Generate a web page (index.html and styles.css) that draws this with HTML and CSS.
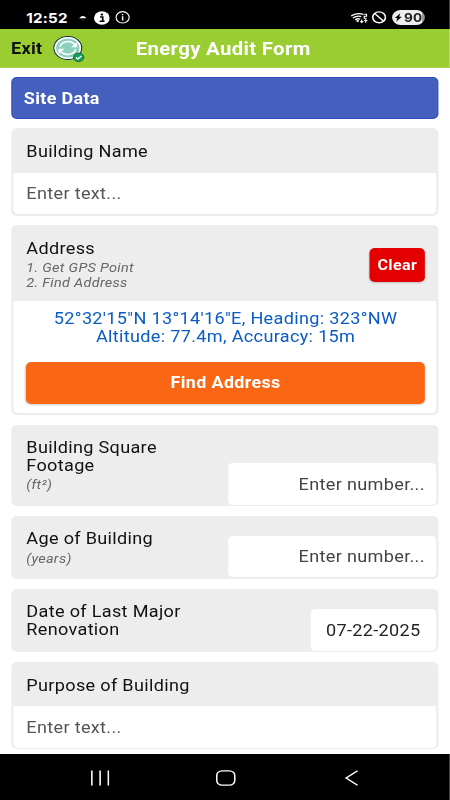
FILE: index.html
```html
<!DOCTYPE html>
<html lang="en">
<head>
<meta charset="utf-8">
<title>Energy Audit Form</title>
<link rel="stylesheet" href="styles.css">
</head>
<body>
<div class="app">
  <div class="status">
    <span class="clock">12:52</span>
    <svg class="s-dot" width="8.6" height="8" viewBox="0 0 8 8" preserveAspectRatio="none"><path d="M1 4.3Q4-.3 7 4.3Z" fill="#fff"/><path d="M2.5 5.5h3L4 7z" fill="#333"/></svg>
    <svg class="s-info" width="14.4" height="14" viewBox="0 0 14 14" preserveAspectRatio="none"><circle cx="7" cy="7" r="6.8" fill="#fff"/><path d="M5.4 6h2.3v4M5 10.2h4.3" fill="none" stroke="#000" stroke-width="1.4"/><circle cx="7" cy="3.6" r="1.1"/></svg>
    <svg class="s-ring" width="13" height="12.6" viewBox="0 0 12 12" preserveAspectRatio="none"><circle cx="6" cy="6" r="5.4" fill="none" stroke="#fff" stroke-width="1"/><path d="M6 5v4M6 2.8v1.2" stroke="#fff" stroke-width="1.2"/></svg>
    <span class="grow"></span>
    <svg class="s-wifi" width="16" height="12" viewBox="0 0 15 12" preserveAspectRatio="none"><path d="M.7 4Q6 .2 11 2.5M2.2 6Q6 3 9 4.6M4.1 8Q6.2 6 8.2 7.2" fill="none" stroke="#fff" stroke-width="1.3"/><circle cx="6.2" cy="9" r="1.1" fill="#fff"/><path d="M11.5 2.3h2v2h-2v2h2M9.5 7.5v3M8.2 9.3l1.3 1.4 1.3-1.4M12.8 10.8v-3M11.5 9l1.3-1.4L14.1 9" fill="none" stroke="#fff" stroke-width=".9"/></svg>
    <svg class="s-block" width="13" height="12.6" viewBox="0 0 12 12" preserveAspectRatio="none"><circle cx="6" cy="6" r="5.2" fill="none" stroke="#fff" stroke-width="1.3"/><path d="M2.5 2.5l7 7" stroke="#fff" stroke-width="1.3"/></svg>
    <div class="battery"><svg width="7" height="9" viewBox="0 0 7 9" preserveAspectRatio="none"><path d="M5.3.3L.4 5h2.3L1.5 8.7 6.6 3.8H4.2z"/></svg><span>90</span></div>
  </div>
  <header class="bar">
    <span class="exit">Exit</span>
    <svg class="sync" width="29" height="28" viewBox="0 0 27 28" preserveAspectRatio="none"><circle cx="12.1" cy="13" r="11.4" fill="#8ad0bd" stroke="#182b4f" stroke-width="1"/><circle cx="12.1" cy="13" r="10.3" fill="none" stroke="#fff" stroke-width="1.4"/><path d="M5.6 11.6A6.8 6.8 0 0 1 17.6 9.3M18.6 14.4A6.8 6.8 0 0 1 6.6 16.7" fill="none" stroke="#fff" stroke-width="1.5"/><path d="M19.8 7v5.2h-5zM4.4 19v-5.2h5z" fill="#fff"/><circle cx="21" cy="22.3" r="4.3" fill="#16a05a" stroke="#155b45" stroke-width=".8"/><path d="M18.8 22.3l1.6 1.7 3-3.2" fill="none" stroke="#fff" stroke-width="1.2"/></svg>
    <h1 class="title">Energy Audit Form</h1>
  </header>
  <main class="form">
    <h2 class="section">Site Data</h2>
    <section class="card">
      <div class="head"><label>Building Name</label></div>
      <div class="field">Enter text...</div>
    </section>
    <section class="card address">
      <div class="head">
        <div><label>Address</label><p class="hint">1. Get GPS Point<br>2. Find Address</p></div>
        <button class="clear">Clear</button>
      </div>
      <div class="location">
        <p class="coords">52°32'15"N 13°14'16"E, Heading: 323°NW<br>Altitude: 77.4m, Accuracy: 15m</p>
        <button class="find">Find Address</button>
      </div>
    </section>
    <section class="card inline footage">
      <div class="caption"><label>Building Square<br>Footage</label><p class="hint">(ft²)</p></div>
      <div class="field number">Enter number...</div>
    </section>
    <section class="card inline age">
      <div class="caption"><label>Age of Building</label><p class="hint">(years)</p></div>
      <div class="field number">Enter number...</div>
    </section>
    <section class="card inline renovation">
      <div class="caption"><label>Date of Last Major<br>Renovation</label></div>
      <div class="field date">07-22-2025</div>
    </section>
    <section class="card">
      <div class="head"><label>Purpose of Building</label></div>
      <div class="field">Enter text...</div>
    </section>
  </main>
  <nav class="nav">
    <svg width="17.2" height="16" viewBox="0 0 16 16" preserveAspectRatio="none"><path d="M1.2.5v15M8 .5v15M14.8.5v15" stroke="#fff" stroke-width="1.3"/></svg>
    <svg width="17.6" height="16" viewBox="0 0 17 16" preserveAspectRatio="none"><rect x=".8" y=".8" width="15.4" height="14.4" rx="4.6" fill="none" stroke="#fff" stroke-width="1.3"/></svg>
    <svg width="17.2" height="16" viewBox="0 0 16 16" preserveAspectRatio="none"><path d="M13.4.7L4 8l9.4 7.3" fill="none" stroke="#fff" stroke-width="1.3"/></svg>
  </nav>
</div>
</body>
</html>
```
FILE: styles.css
```css
* { box-sizing: border-box; margin: 0; padding: 0; }
html, body { width: 450px; height: 800px; overflow: hidden; background: #fff; }

/* The interface is laid out at 398px and widened to the viewport. */
.app {
  width: 398.23px;
  height: 800px;
  display: flex;
  flex-direction: column;
  transform: scaleX(1.13);
  transform-origin: 0 0;
  font-family: Roboto, sans-serif;
  font-size: 16px;
  line-height: 18.2px;
  letter-spacing: .29px;
  color: #111;
}
svg { display: block; flex: none; }

.status {
  height: 29px;
  flex: none;
  display: flex;
  align-items: center;
  padding: 6px 22px 0 23.2px;
  background: #000;
  color: #fff;
}
.clock { font: 700 13.4px/16px Inter, sans-serif; letter-spacing: .2px; width: 45.5px; }
.s-info { margin-left: 5.7px; }
.s-ring { margin-left: 4.5px; }
.grow { flex: 1; }
.s-block { margin: 0 4.8px 0 2.5px; }
.battery {
  width: 29.5px;
  height: 15px;
  display: flex;
  align-items: center;
  justify-content: center;
  gap: 1.5px;
  border-radius: 8px;
  background: linear-gradient(90deg, #eee 90%, #999 90%);
  color: #222;
  font: 700 12px/15px Inter, sans-serif;
  letter-spacing: .2px;
}

.bar {
  height: 38.5px;
  flex: none;
  display: grid;
  grid-template-columns: 37px 29px 1fr;
  align-items: center;
  padding-left: 9.7px;
  background: #9acd32;
  border-bottom: 1px solid #a9d64e;
}
.exit { font-weight: 700; padding-top: 3px; }
.title { font-size: 18px; line-height: 20px; color: #fff; padding: 2.5px 0 0 44.5px; }
.sync { margin-top: 3px; }

.form {
  flex: 1;
  min-height: 0;
  display: flex;
  flex-direction: column;
  gap: 9.6px;
  padding: 9.9px 10.1px 0 10.4px;
}
.section {
  height: 41.3px;
  flex: none;
  padding-left: 9.7px;
  border: 1px solid #2f4ebd;
  border-radius: 5px;
  background: #455fbe;
  color: #fff;
  font-size: 15.9px;
  line-height: 41px;
}
.card {
  flex: none;
  height: 87.4px;
  display: flex;
  flex-direction: column;
  padding: 0 2px 1.8px;
  background: #ededed;
  border-radius: 5px;
}
.head {
  height: 44.4px;
  flex: none;
  display: flex;
  align-items: center;
  justify-content: space-between;
  padding: 4px 10.1px 0 10.9px;
}
.field {
  flex: 1;
  display: flex;
  align-items: center;
  padding: 1.8px 10.2px 0 10.9px;
  background: #fff;
  border-radius: 0 0 4px 4px;
  color: #555;
}
.hint { font-size: 12.8px; line-height: 14.7px; letter-spacing: .25px; font-style: italic; color: #666; }
.address { height: 189.7px; }
.address .head { height: 76px; }
.address .hint { padding-top: 3px; }
button { border: 0; font: 700 15.8px/18px Roboto, sans-serif; letter-spacing: .34px; color: #fff; }
.clear {
  width: 48.8px;
  height: 34.5px;
  margin-top: -1px;
  font-size: 14.2px;
  background: #e50000;
  border-radius: 4.8px;
  box-shadow: 0 1px 2px #0003;
}
.location {
  flex: 1;
  display: flex;
  flex-direction: column;
  justify-content: space-between;
  padding: 8.6px 10px 9.6px 10.8px;
  background: #fff;
  border-radius: 0 0 4px 4px;
}
.coords { text-align: center; color: #0b5bc5; line-height: 18.3px; }
.find {
  height: 42px;
  padding-top: 1.6px;
  background: #f96714;
  border-radius: 4.8px;
  box-shadow: 0 1px 2px #0003;
}

.inline { flex-direction: row; justify-content: space-between; align-items: flex-end; }
.caption { align-self: flex-start; padding: 14.5px 0 0 10.9px; }
.inline .hint { padding-top: 3px; }
.inline .field { flex: none; height: 41.5px; border-radius: 4px; }
.inline .number { width: 184.3px; justify-content: flex-end; color: #444; }
.inline .date { width: 111.6px; justify-content: center; padding: 3px 0 0; color: #222; }
.footage { height: 81.8px; }
.age { height: 63.2px; }
.renovation { height: 63.6px; }

.nav {
  height: 46.3px;
  flex: none;
  display: flex;
  align-items: center;
  justify-content: space-between;
  padding: 2px 78.6px 0 79.8px;
  background: #000;
}
```
